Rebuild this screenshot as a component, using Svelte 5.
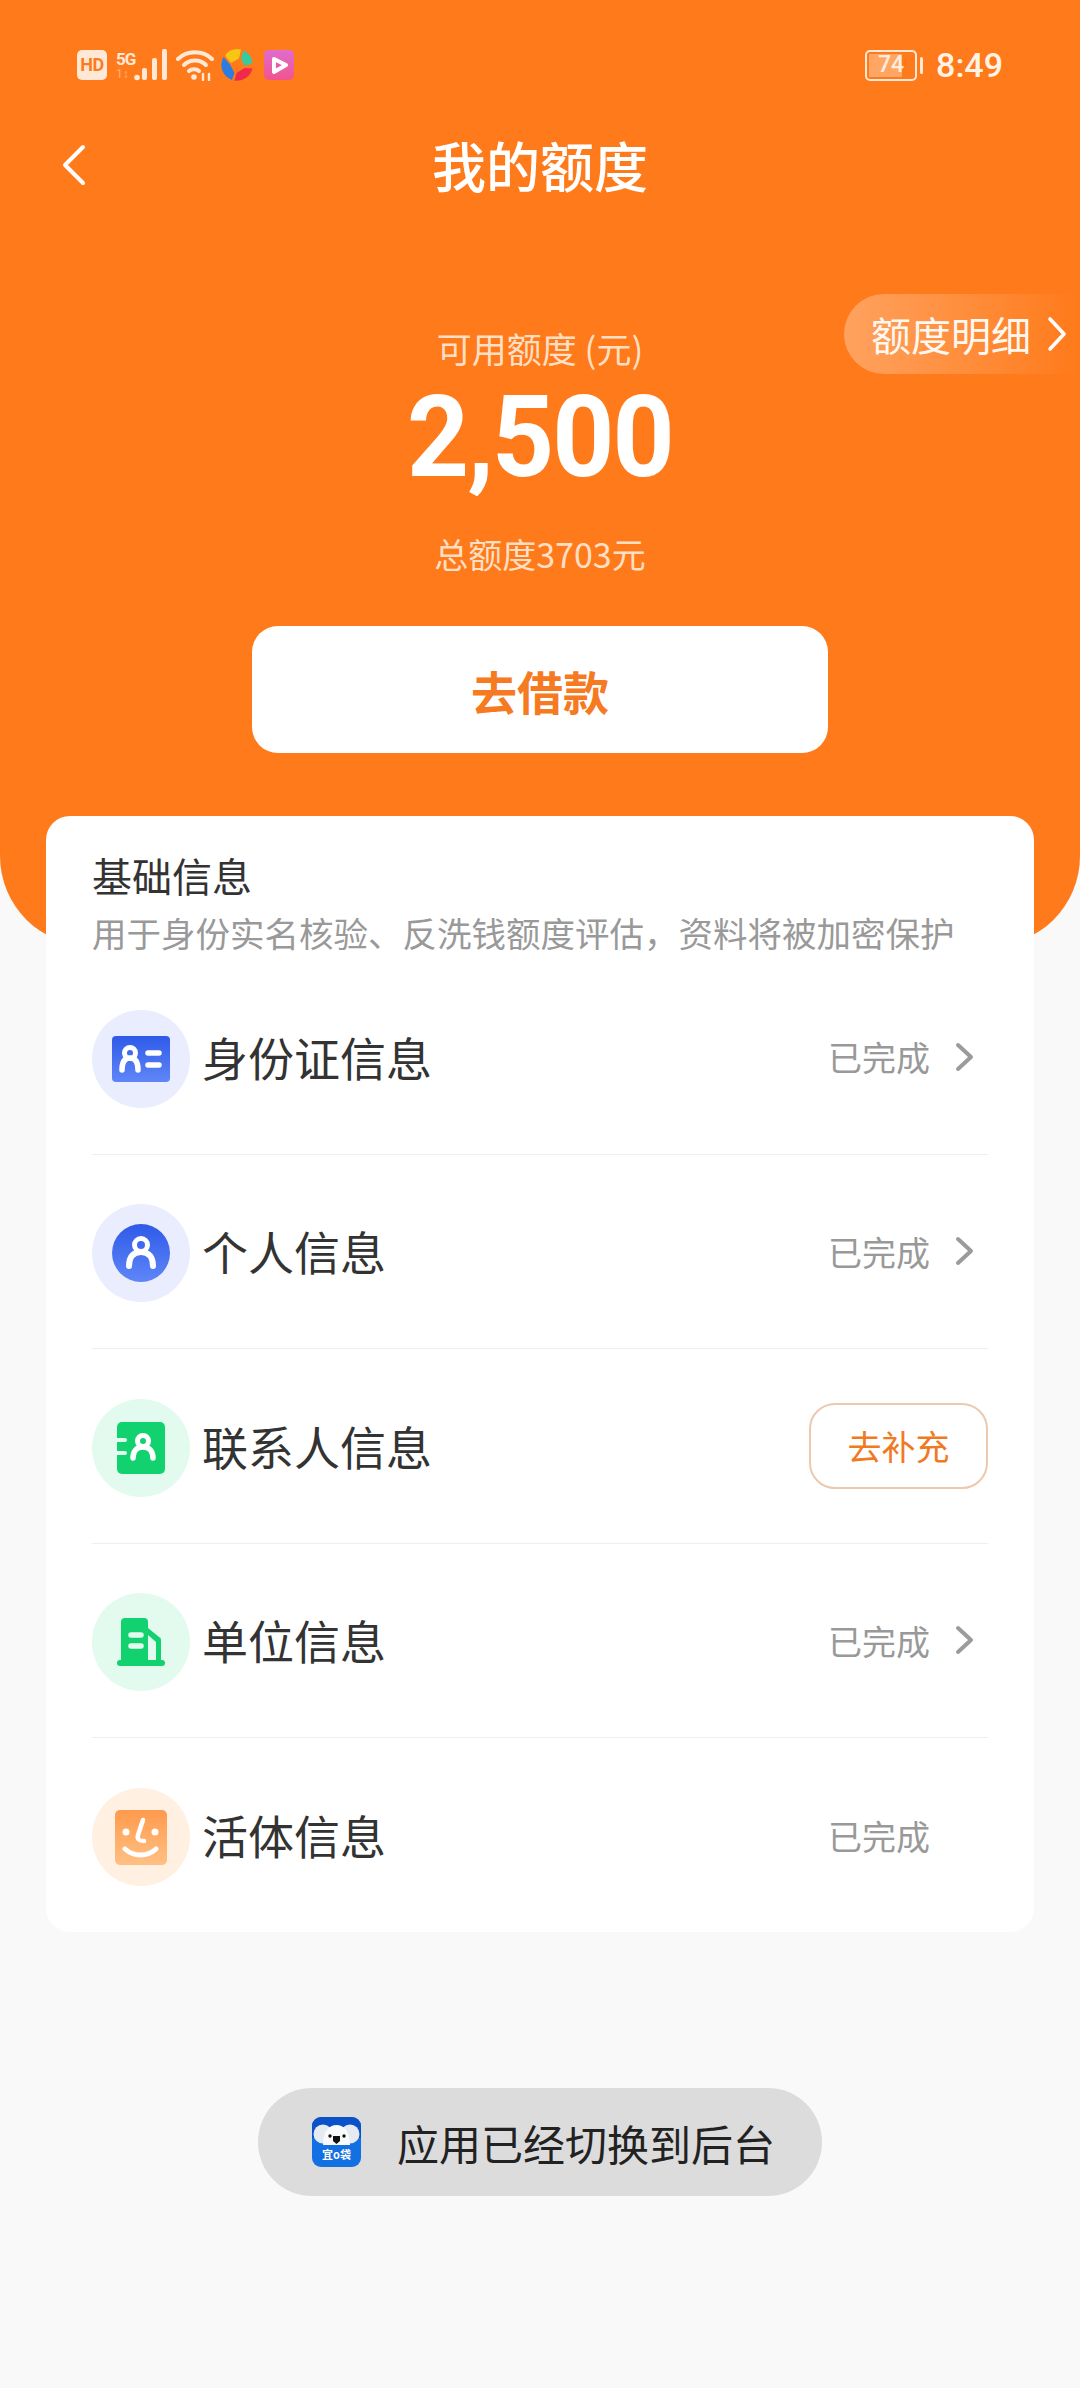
<script lang="ts">
	const rows = [
		{ label: '身份证信息', tint: 'blue', icon: 'card', status: '已完成', arrow: true },
		{ label: '个人信息', tint: 'blue', icon: 'person', status: '已完成', arrow: true },
		{ label: '联系人信息', tint: 'green', icon: 'book', action: '去补充' },
		{ label: '单位信息', tint: 'green', icon: 'office', status: '已完成', arrow: true },
		{ label: '活体信息', tint: 'peach', icon: 'face', status: '已完成', arrow: false }
	];
</script>

<svg width="0" height="0" class="defs" aria-hidden="true">
	<defs>
		<linearGradient id="blueFill" x1="0" y1="0" x2="0" y2="1">
			<stop offset="0" stop-color="#2f5ae8" />
			<stop offset="1" stop-color="#5f86f8" />
		</linearGradient>
		<linearGradient id="peachFill" x1="0" y1="0" x2="0" y2="1">
			<stop offset="0" stop-color="#ff9a4d" />
			<stop offset="1" stop-color="#ffc084" />
		</linearGradient>
	</defs>
</svg>

<div class="page">
	<header class="hero">
		<div class="statusbar">
			<div class="status-left">
				<span class="hd">HD</span>
				<span class="net">
					<span class="net-type">
						<b>5G</b>
						<i>1↕</i>
					</span>
					<svg width="33" height="32" viewBox="0 0 33 32" fill="#ffe9d6" aria-hidden="true">
						<circle cx="3" cy="28.500" r="2.800" />
						<rect x="8" y="19" width="5" height="12" rx="2" />
						<rect x="18" y="9" width="5" height="22" rx="2" />
						<rect x="28" y="0" width="5" height="31" rx="2" />
					</svg>
				</span>
				<svg width="38" height="32" viewBox="0 0 38 32" fill="none" stroke="#ffe9d6" stroke-width="4" stroke-linecap="round" aria-hidden="true">
					<path d="M2 10C11 1 27 1 36 10" />
					<path d="M8 16C14 10 24 10 30 16" />
					<path d="M13 22C15.500 19.500 20.500 19.500 23 22" />
					<circle cx="18" cy="28" r="2.800" fill="#ffe9d6" stroke="none" />
					<path d="M27 25v6M33 25v6" stroke-width="2.400" />
				</svg>
				<svg class="colors" width="32" height="32" viewBox="0 0 32 32" aria-hidden="true">
					<path d="M10 14 18 9.500 20 .5A16 16 0 0 0 4 6.500Z" fill="#f7c516" />
					<path d="M20 9.500 23.500 17 31.500 14A16 16 0 0 0 22.500 1.500Z" fill="#37c9a0" />
					<path d="M23.500 19 15.500 24 13.500 31.500A16 16 0 0 0 31.500 19.500Z" fill="#f02a4a" />
					<path d="M9 15.500 13.500 24 11 31A16 16 0 0 1 2.500 8Z" fill="#2d7ce0" />
				</svg>
				<svg width="30" height="30" viewBox="0 0 30 30" aria-hidden="true">
					<defs>
						<linearGradient id="videoFill" x1="0" y1="0" x2="0" y2="1">
							<stop offset="0" stop-color="#e06bd0" />
							<stop offset="1" stop-color="#f2548c" />
						</linearGradient>
					</defs>
					<rect width="30" height="30" rx="5" fill="url(#videoFill)" />
					<path d="M10 9 L22 15 L10 22Z" fill="#e65cb0" stroke="#fff" stroke-width="4" stroke-linejoin="round" />
				</svg>
			</div>
			<div class="status-right">
				<span class="battery"><span class="level"></span><span class="pct">74</span></span>
				<span class="battery-tip"></span>
				<span class="clock">8:49</span>
			</div>
		</div>

		<div class="navbar">
			<svg class="back" width="28" height="42" viewBox="0 0 28 42" fill="none" stroke="#fff" stroke-width="4" stroke-linecap="round" stroke-linejoin="round" aria-hidden="true">
				<path d="M23 3 5 21l18 18" />
			</svg>
			<h1>我的额度</h1>
		</div>

		<div class="detail-pill">
			<span>额度明细</span>
			<svg width="22" height="36" viewBox="0 0 22 36" fill="none" stroke="#fff" stroke-width="3.600" stroke-linecap="round" stroke-linejoin="round" aria-hidden="true">
				<path d="M3 3l14 15L3 33" />
			</svg>
		</div>

		<div class="quota">
			<div class="quota-label">可用额度 (元)</div>
			<div class="quota-value">2,500</div>
			<div class="quota-total">总额度3703元</div>
			<button class="borrow">去借款</button>
		</div>
	</header>

	<section class="card">
		<h2>基础信息</h2>
		<p>用于身份实名核验、反洗钱额度评估，资料将被加密保护</p>

		<ul>
			{#each rows as row}
				<li>
					<span class="badge {row.tint}">
						{#if row.icon === 'card'}
							<svg width="58" height="46" viewBox="0 0 58 46" aria-hidden="true">
								<rect width="58" height="46" rx="4" fill="url(#blueFill)" />
								<circle cx="18" cy="17" r="5.500" fill="none" stroke="#fff" stroke-width="5" />
								<path d="M10 34c0-8 3-12 8-12s8 4 8 12" fill="none" stroke="#fff" stroke-width="5.500" stroke-linecap="round" />
								<path d="M36 17h11M36 29h11" stroke="#fff" stroke-width="5.500" stroke-linecap="round" />
							</svg>
						{:else if row.icon === 'person'}
							<svg width="58" height="58" viewBox="0 0 58 58" aria-hidden="true">
								<circle cx="29" cy="29" r="29" fill="url(#blueFill)" />
								<circle cx="29" cy="21" r="6.500" fill="none" stroke="#fff" stroke-width="5" />
								<path d="M17 42c0-9 4-14 12-14s12 5 12 14" fill="none" stroke="#fff" stroke-width="6" stroke-linecap="round" />
							</svg>
						{:else if row.icon === 'book'}
							<svg width="56" height="52" viewBox="0 0 56 52" aria-hidden="true">
								<rect x="4" width="48" height="52" rx="5" fill="#12d16f" />
								<path d="M1 18h11M1 31h11" stroke="#e3fbef" stroke-width="4" stroke-linecap="round" />
								<circle cx="30" cy="19" r="5.500" fill="none" stroke="#fff" stroke-width="5" />
								<path d="M20 36c0-7 4-11 10-11s10 4 10 11" fill="none" stroke="#fff" stroke-width="5.500" stroke-linecap="round" />
							</svg>
						{:else if row.icon === 'office'}
							<svg width="48" height="48" viewBox="0 0 48 48" aria-hidden="true">
								<path d="M4 4a4 4 0 0 1 4-4h19a4 4 0 0 1 4 4v40H4Z" fill="#12d16f" />
								<path d="M31 10 42 19a3 3 0 0 1 2 3V44h-5V24L31 17Z" fill="#12d16f" />
								<path d="M14 17h10M14 28h10" stroke="#e3fbef" stroke-width="5.500" stroke-linecap="round" />
								<rect y="42" width="48" height="6" rx="3" fill="#12d16f" />
							</svg>
						{:else}
							<svg width="52" height="55" viewBox="0 0 52 55" aria-hidden="true">
								<rect width="52" height="55" rx="5" fill="url(#peachFill)" />
								<circle cx="11" cy="22" r="3.500" fill="#fff" />
								<circle cx="40" cy="22" r="3.500" fill="#fff" />
								<path d="M28 10 23 25c-1 4 1 6 6 6" fill="none" stroke="#fff" stroke-width="4.500" stroke-linecap="round" stroke-linejoin="round" />
								<path d="M10 39c9 8 22 8 31 0" fill="none" stroke="#fff" stroke-width="5" stroke-linecap="round" />
							</svg>
						{/if}
					</span>
					<span class="label">{row.label}</span>
					{#if row.action}
						<button class="fill-in">{row.action}</button>
					{:else}
						<span class="state">{row.status}</span>
						<span class="arrow-slot">
							{#if row.arrow}
								<svg width="20" height="30" viewBox="0 0 20 30" fill="none" stroke="#9b9b9b" stroke-width="4" stroke-linecap="round" stroke-linejoin="round" aria-hidden="true">
									<path d="M3 3l13 12L3 27" />
								</svg>
							{/if}
						</span>
					{/if}
				</li>
			{/each}
		</ul>
	</section>

	<div class="toast-wrap">
		<div class="toast">
			<svg width="49" height="50" viewBox="0 0 49 50" aria-hidden="true">
				<rect width="49" height="50" rx="9" fill="#1270e2" />
				<path d="M0 9a9 9 0 0 1 9-9h31a9 9 0 0 1 9 9v12H0Z" fill="#0b52c8" />
				<circle cx="11" cy="17" r="9.500" fill="#e6ebf2" />
				<circle cx="38" cy="17" r="9.500" fill="#e6ebf2" />
				<path d="M11 28c0-14 6-20 13.500-20S38 14 38 28Z" fill="#f9fafb" />
				<circle cx="18" cy="19" r="1.700" fill="#111" />
				<circle cx="32" cy="19" r="1.700" fill="#111" />
				<path d="M21 19h7v5l-3.500 3-3.500-3Z" fill="#111" />
				<text x="24.500" y="42" text-anchor="middle" class="app-name">宜o袋</text>
			</svg>
			<span>应用已经切换到后台</span>
		</div>
	</div>
</div>

<style>
	:global(body) {
		margin: 0;
		background: #f9f9f9;
	}

	.defs {
		position: absolute;
	}

	.page {
		width: 1080px;
		height: 2388px;
		overflow: hidden;
		background: #f9f9f9;
		font-family: 'Noto Sans CJK SC', 'Noto Sans', sans-serif;
		color: #333;
	}

	.hero {
		position: relative;
		height: 946px;
		box-sizing: border-box;
		padding: 45px 0 0;
		background: #ff7a1a;
		border-radius: 0 0 90px 90px;
		color: #fff;
	}

	.statusbar {
		display: flex;
		justify-content: space-between;
		align-items: center;
		height: 40px;
		padding: 0 77px;
	}

	.status-left,
	.status-right {
		display: flex;
		align-items: center;
	}

	.status-left {
		gap: 9px;
	}

	.hd {
		width: 30px;
		height: 30px;
		border-radius: 5px;
		background: #ffe9d6;
		color: #ff7a1a;
		font: 700 18px/30px 'Roboto', sans-serif;
		text-align: center;
		letter-spacing: -0.5px;
	}

	.net {
		display: flex;
		align-items: flex-end;
		gap: 1px;
	}

	.net-type {
		display: flex;
		flex-direction: column;
		width: 17px;
		color: #ffe9d6;
		font-family: 'Roboto', sans-serif;
		white-space: nowrap;
	}

	.net-type b {
		font-size: 17px;
		line-height: 18px;
		font-weight: 700;
		letter-spacing: -1px;
	}

	.net-type i {
		font-size: 12px;
		line-height: 13px;
		font-style: normal;
		opacity: 0.5;
	}

	.colors {
		margin: 0 2px 0 -2px;
	}

	.status-right {
		gap: 3px;
	}

	.battery {
		position: relative;
		display: block;
		width: 52px;
		height: 31px;
		box-sizing: border-box;
		border: 2.500px solid #ffe9d6;
		border-radius: 5px;
	}

	.level {
		position: absolute;
		left: 2px;
		top: 2px;
		bottom: 2px;
		width: 33px;
		background: rgba(255, 233, 214, 0.4);
		border-radius: 1px;
	}

	.pct {
		position: absolute;
		inset: 0;
		text-align: center;
		font: 500 23px/26px 'Roboto', sans-serif;
		color: #ffeedd;
	}

	.battery-tip {
		width: 3px;
		height: 17px;
		background: #ffe9d6;
		border-radius: 2px;
	}

	.clock {
		margin-left: 10px;
		font: 500 34px/40px 'Roboto', sans-serif;
		color: #fff3e6;
	}

	.navbar {
		position: relative;
		display: flex;
		justify-content: center;
		align-items: center;
		height: 80px;
		margin-top: 40px;
	}

	.back {
		position: absolute;
		left: 60px;
		top: 19px;
	}

	h1 {
		margin: 0;
		font-size: 54px;
		font-weight: 500;
		line-height: 80px;
	}

	.detail-pill {
		position: absolute;
		top: 294px;
		right: 0;
		left: 844px;
		height: 80px;
		display: flex;
		align-items: center;
		gap: 16px;
		padding-left: 27px;
		box-sizing: border-box;
		border-radius: 40px 0 0 40px;
		background: linear-gradient(90deg, rgba(255, 255, 255, 0.3), rgba(255, 255, 255, 0));
		font-size: 40px;
		color: #fff8f0;
	}

	.quota {
		display: flex;
		flex-direction: column;
		align-items: center;
		margin-top: 119px;
	}

	.quota-label {
		font-size: 35px;
		line-height: 48px;
		color: #ffdfc4;
	}

	.quota-value {
		font: 700 114px/120px 'Roboto', sans-serif;
		letter-spacing: -2px;
		margin-top: 5px;
		transform: scaleX(0.95);
	}

	.quota-total {
		margin-top: 33px;
		font-size: 34px;
		line-height: 48px;
		color: #ffdfc4;
	}

	.borrow {
		width: 576px;
		height: 127px;
		margin-top: 48px;
		border: 0;
		border-radius: 26px;
		background: #fff;
		color: #f57a22;
		font: 700 46px/1 'Noto Sans CJK SC', sans-serif;
	}

	.card {
		position: relative;
		box-sizing: border-box;
		width: 988px;
		height: 1116px;
		margin: -130px auto 0;
		padding: 32px 46px 0;
		background: #fff;
		border-radius: 24px;
	}

	h2 {
		margin: 0;
		font-size: 40px;
		font-weight: 400;
		line-height: 54px;
		color: #333;
	}

	.card p {
		margin: 5px 0 0;
		font-size: 34.500px;
		line-height: 50px;
		color: #999;
		white-space: nowrap;
	}

	ul {
		list-style: none;
		margin: 3px 0 0;
		padding: 0;
	}

	li {
		display: flex;
		align-items: center;
		height: 194.500px;
		box-sizing: border-box;
		padding-top: 4px;
		border-bottom: 1.500px solid #eeeeee;
	}

	li:last-child {
		border-bottom: 0;
	}

	.badge {
		display: flex;
		justify-content: center;
		align-items: center;
		flex: none;
		width: 98px;
		height: 98px;
		border-radius: 50%;
	}

	.badge.blue {
		background: #e9edfd;
	}

	.badge.green {
		background: #e3fbef;
	}

	.badge.peach {
		background: #fff0e2;
	}

	.label {
		flex: 1;
		margin: -6px 0 0 12px;
		font-size: 46px;
		color: #333;
	}

	.state {
		margin: -4px -2px 0 0;
		font-size: 34px;
		color: #999;
	}

	.arrow-slot {
		display: flex;
		justify-content: flex-end;
		box-sizing: border-box;
		width: 60px;
		margin-top: -4px;
		padding-right: 13px;
	}

	.fill-in {
		width: 179px;
		height: 86px;
		margin-top: -4px;
		border: 2px solid #ecc9ae;
		border-radius: 26px;
		background: #fff;
		color: #f07a22;
		font: 400 34px/1 'Noto Sans CJK SC', sans-serif;
	}

	.toast-wrap {
		display: flex;
		justify-content: center;
		margin-top: 156px;
	}

	.toast {
		display: flex;
		align-items: center;
		width: 564px;
		height: 108px;
		box-sizing: border-box;
		padding-left: 54px;
		gap: 36px;
		border-radius: 54px;
		background: #dcdcdc;
		font-size: 42px;
		color: #222;
	}

	.app-name {
		font-size: 11px;
		font-weight: 700;
		fill: #fff;
	}
</style>
